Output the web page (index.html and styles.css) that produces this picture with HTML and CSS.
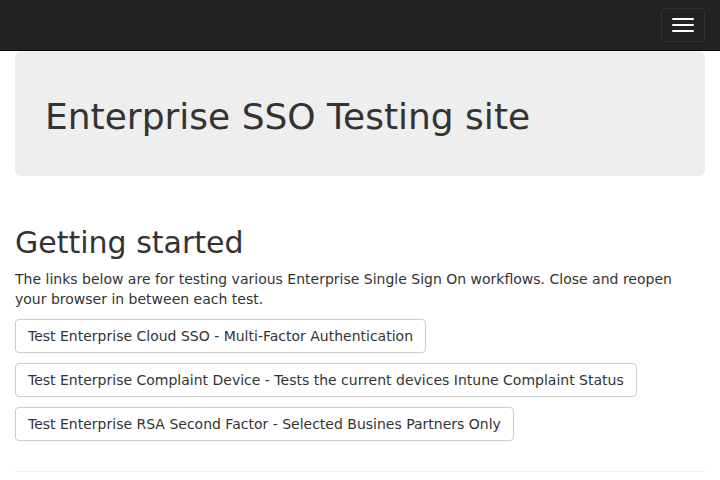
FILE: index.html
```html
<!DOCTYPE html>
<html lang="en">
<head>
<meta charset="utf-8">
<title>Enterprise SSO Testing site</title>
<link rel="stylesheet" href="styles.css">
</head>
<body>
<nav class="navbar">
  <button class="navbar-toggle" type="button" aria-label="Toggle navigation">
    <span class="icon-bar"></span>
    <span class="icon-bar"></span>
    <span class="icon-bar"></span>
  </button>
</nav>
<div class="container">
  <div class="jumbotron">
    <h1>Enterprise SSO Testing site</h1>
  </div>
  <h2>Getting started</h2>
  <p>The links below are for testing various Enterprise Single Sign On workflows. Close and reopen your browser in between each test.</p>
  <p><a class="btn" href="#">Test Enterprise Cloud SSO - Multi-Factor Authentication</a></p>
  <p><a class="btn" href="#">Test Enterprise Complaint Device - Tests the current devices Intune Complaint Status</a></p>
  <p><a class="btn" href="#">Test Enterprise RSA Second Factor - Selected Busines Partners Only</a></p>
  <hr>
</div>
</body>
</html>
```
FILE: styles.css
```css
* { box-sizing: border-box; }
html, body { margin: 0; padding: 0; }
body {
  font-family: "DejaVu Sans", sans-serif;
  font-size: 14px;
  line-height: 20px;
  color: #333;
  background: #fff;
}
.navbar {
  height: 51px;
  background: #222;
  border-bottom: 1px solid #080808;
  display: flex;
  justify-content: flex-end;
  align-items: flex-start;
  padding: 8px 15px 0 0;
}
.navbar-toggle {
  width: 44px;
  height: 34px;
  padding: 9px 10px;
  background: transparent;
  border: 1px solid #333;
  border-radius: 4px;
  display: flex;
  flex-direction: column;
  gap: 4px;
  align-items: center;
  justify-content: center;
}
.icon-bar {
  display: block;
  width: 22px;
  height: 2px;
  background: #fff;
  border-radius: 1px;
}
.container {
  padding: 0 15px;
}
.jumbotron {
  background: #eee;
  border-radius: 6px;
  padding: 46px 30px 39px;
  margin-bottom: 50px;
}
.jumbotron h1 {
  margin: 0;
  font-size: 36px;
  font-weight: 500;
  line-height: 39.6px;
  color: #333;
}
h2 {
  margin: 0 0 10px;
  font-size: 30px;
  font-weight: 500;
  line-height: 33px;
}
p { margin: 0 0 10px; }
.btn {
  display: inline-block;
  padding: 6px 12px;
  height: 34px;
  font-size: 14px;
  line-height: 20px;
  color: #333;
  background: #fff;
  border: 1px solid #ccc;
  border-radius: 4px;
  text-decoration: none;
}
hr {
  margin: 30px 0 20px;
  border: 0;
  border-top: 1px solid #eee;
}
```
